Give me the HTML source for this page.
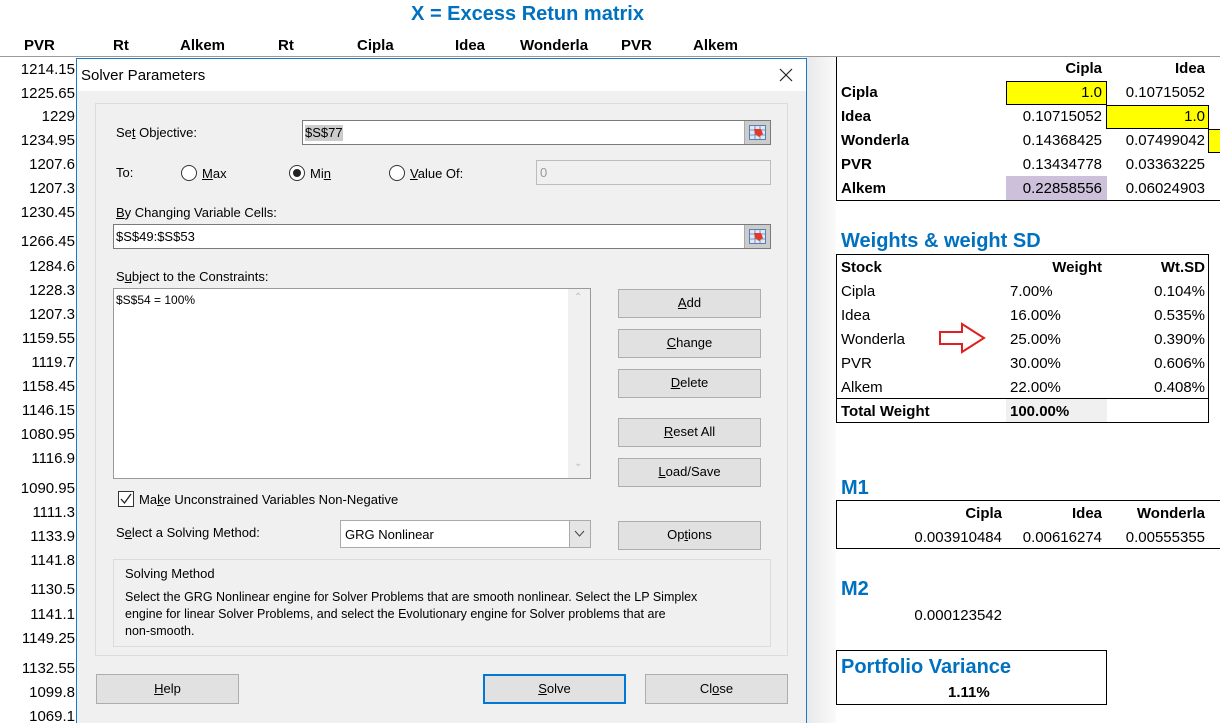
<!DOCTYPE html>
<html><head><meta charset="utf-8"><style>
*{margin:0;padding:0;box-sizing:border-box}
body{width:1220px;height:723px;overflow:hidden;background:#fff;position:relative;font-family:"Liberation Sans",sans-serif;color:#000}
.a{position:absolute;white-space:nowrap}
.xl{font-size:15px;line-height:18px}
.b{font-weight:bold}
.blue{color:#0070c0;font-weight:bold}
.num{position:absolute;right:1145px;font-size:15px;line-height:18px}
.d{font-size:13px;line-height:16px;color:#000}
.btn{position:absolute;background:#e1e1e1;border:1px solid #adadad;font-size:13px;text-align:center;line-height:26px}
.inp{position:absolute;background:#fff;border:1px solid #7a7a7a}
.rad{position:absolute;width:16px;height:16px;border:1px solid #333;border-radius:50%;background:#fff}
u{text-decoration:underline}
.r{text-align:right}
</style></head><body>
<div class="a blue" style="left:400px;top:2px;width:255px;text-align:center;font-size:20px;line-height:24px">X = Excess Retun matrix</div>
<div class="a xl b" style="left:24px;top:37px">PVR</div>
<div class="a xl b" style="left:113px;top:37px">Rt</div>
<div class="a xl b" style="left:180px;top:37px">Alkem</div>
<div class="a xl b" style="left:278px;top:37px">Rt</div>
<div class="a xl b" style="left:357px;top:37px">Cipla</div>
<div class="a xl b" style="left:455px;top:37px">Idea</div>
<div class="a xl b" style="left:520px;top:37px">Wonderla</div>
<div class="a xl b" style="left:621px;top:37px">PVR</div>
<div class="a xl b" style="left:693px;top:37px">Alkem</div>
<div class="a" style="left:0;top:56px;width:1220px;height:1px;background:#9a9a9a"></div>

<div class="num" style="top:61px">1214.15</div>
<div class="num" style="top:85px">1225.65</div>
<div class="num" style="top:108px">1229</div>
<div class="num" style="top:132px">1234.95</div>
<div class="num" style="top:156px">1207.6</div>
<div class="num" style="top:180px">1207.3</div>
<div class="num" style="top:204px">1230.45</div>
<div class="num" style="top:233px">1266.45</div>
<div class="num" style="top:258px">1284.6</div>
<div class="num" style="top:282px">1228.3</div>
<div class="num" style="top:306px">1207.3</div>
<div class="num" style="top:330px">1159.55</div>
<div class="num" style="top:354px">1119.7</div>
<div class="num" style="top:378px">1158.45</div>
<div class="num" style="top:402px">1146.15</div>
<div class="num" style="top:426px">1080.95</div>
<div class="num" style="top:450px">1116.9</div>
<div class="num" style="top:480px">1090.95</div>
<div class="num" style="top:504px">1111.3</div>
<div class="num" style="top:528px">1133.9</div>
<div class="num" style="top:552px">1141.8</div>
<div class="num" style="top:581px">1130.5</div>
<div class="num" style="top:606px">1141.1</div>
<div class="num" style="top:630px">1149.25</div>
<div class="num" style="top:660px">1132.55</div>
<div class="num" style="top:684px">1099.8</div>
<div class="num" style="top:708px">1069.1</div>

<div class="a" style="left:806px;top:57px;width:30px;height:666px;background:linear-gradient(90deg,#e8e8e8,#fafafa)"></div>
<div class="a" style="left:836px;top:57px;width:400px;height:144px;border-left:1px solid #000;border-bottom:1px solid #000"></div>
<div class="a" style="left:1006px;top:81px;width:101px;height:24px;background:#ffff00;border:1px solid #000"></div>
<div class="a" style="left:1106px;top:105px;width:103px;height:24px;background:#ffff00;border:1px solid #000"></div>
<div class="a" style="left:1208px;top:129px;width:14px;height:24px;background:#ffff00;border:1px solid #000"></div>
<div class="a" style="left:1006px;top:176px;width:101px;height:24px;background:#ccc0da"></div>
<div class="a xl b r" style="left:1006px;top:60px;width:96px">Cipla</div>
<div class="a xl b r" style="left:1106px;top:60px;width:99px">Idea</div>
<div class="a xl b" style="left:841px;top:84px">Cipla</div>
<div class="a xl b" style="left:841px;top:108px">Idea</div>
<div class="a xl b" style="left:841px;top:132px">Wonderla</div>
<div class="a xl b" style="left:841px;top:156px">PVR</div>
<div class="a xl b" style="left:841px;top:180px">Alkem</div>
<div class="a xl r" style="left:1006px;top:84px;width:96px">1.0</div>
<div class="a xl r" style="left:1106px;top:84px;width:99px">0.10715052</div>
<div class="a xl r" style="left:1006px;top:108px;width:96px">0.10715052</div>
<div class="a xl r" style="left:1106px;top:108px;width:99px">1.0</div>
<div class="a xl r" style="left:1006px;top:132px;width:96px">0.14368425</div>
<div class="a xl r" style="left:1106px;top:132px;width:99px">0.07499042</div>
<div class="a xl r" style="left:1006px;top:156px;width:96px">0.13434778</div>
<div class="a xl r" style="left:1106px;top:156px;width:99px">0.03363225</div>
<div class="a xl r" style="left:1006px;top:180px;width:96px">0.22858556</div>
<div class="a xl r" style="left:1106px;top:180px;width:99px">0.06024903</div>

<div class="a blue" style="left:841px;top:229px;font-size:20px;line-height:24px">Weights &amp; weight SD</div>
<div class="a" style="left:836px;top:254px;width:373px;height:169px;border:1px solid #000"></div>
<div class="a" style="left:836px;top:398px;width:373px;height:1px;background:#000"></div>
<div class="a" style="left:1006px;top:399px;width:101px;height:23px;background:#f0f0f0"></div>
<div class="a xl b" style="left:841px;top:259px">Stock</div>
<div class="a xl b r" style="left:1006px;top:259px;width:96px">Weight</div>
<div class="a xl b r" style="left:1106px;top:259px;width:99px">Wt.SD</div>
<div class="a xl" style="left:841px;top:283px">Cipla</div>
<div class="a xl" style="left:841px;top:307px">Idea</div>
<div class="a xl" style="left:841px;top:331px">Wonderla</div>
<div class="a xl" style="left:841px;top:355px">PVR</div>
<div class="a xl" style="left:841px;top:379px">Alkem</div>
<div class="a xl" style="left:1010px;top:283px">7.00%</div>
<div class="a xl" style="left:1010px;top:307px">16.00%</div>
<div class="a xl" style="left:1010px;top:331px">25.00%</div>
<div class="a xl" style="left:1010px;top:355px">30.00%</div>
<div class="a xl" style="left:1010px;top:379px">22.00%</div>
<div class="a xl r" style="left:1106px;top:283px;width:99px">0.104%</div>
<div class="a xl r" style="left:1106px;top:307px;width:99px">0.535%</div>
<div class="a xl r" style="left:1106px;top:331px;width:99px">0.390%</div>
<div class="a xl r" style="left:1106px;top:355px;width:99px">0.606%</div>
<div class="a xl r" style="left:1106px;top:379px;width:99px">0.408%</div>
<div class="a xl b" style="left:841px;top:403px">Total Weight</div>
<div class="a xl b" style="left:1010px;top:403px">100.00%</div>
<svg class="a" style="left:938px;top:322px" width="50" height="32"><path d="M2 10 H24 V2 L46 16 L24 30 V22 H2 Z" fill="none" stroke="#e02020" stroke-width="2"/></svg>

<div class="a blue" style="left:841px;top:476px;font-size:20px;line-height:24px">M1</div>
<div class="a" style="left:836px;top:500px;width:400px;height:49px;border:1px solid #000"></div>
<div class="a xl b r" style="left:900px;top:505px;width:102px">Cipla</div>
<div class="a xl b r" style="left:1006px;top:505px;width:96px">Idea</div>
<div class="a xl b r" style="left:1106px;top:505px;width:99px">Wonderla</div>
<div class="a xl r" style="left:900px;top:529px;width:102px">0.003910484</div>
<div class="a xl r" style="left:1006px;top:529px;width:96px">0.00616274</div>
<div class="a xl r" style="left:1106px;top:529px;width:99px">0.00555355</div>
<div class="a blue" style="left:841px;top:577px;font-size:20px;line-height:24px">M2</div>
<div class="a xl r" style="left:900px;top:607px;width:102px">0.000123542</div>
<div class="a" style="left:836px;top:650px;width:271px;height:55px;border:1px solid #000"></div>
<div class="a blue" style="left:841px;top:655px;font-size:20px;line-height:24px">Portfolio Variance</div>
<div class="a xl b" style="left:948px;top:684px">1.11%</div>

<div class="a" style="left:76px;top:58px;width:731px;height:665px;background:#f0f0f0;border:1px solid #1979ca;border-bottom:none"></div>
<div class="a" style="left:77px;top:59px;width:729px;height:32px;background:#fff"></div>
<div class="a" style="left:81px;top:67px;font-size:15px;line-height:18px">Solver Parameters</div>
<svg class="a" style="left:779px;top:68px" width="14" height="14"><path d="M1 1 L13 13 M13 1 L1 13" stroke="#222" stroke-width="1.2"/></svg>
<div class="a" style="left:95px;top:103px;width:693px;height:553px;border:1px solid #dcdcdc"></div>

<div class="a d" style="left:116px;top:125px">Se<u>t</u> Objective:</div>
<div class="inp" style="left:302px;top:120px;width:469px;height:25px"></div>
<div class="a d" style="left:305px;top:125px;background:#cccccc">$S$77</div>
<div class="a" style="left:744px;top:121px;width:26px;height:23px;background:#ccc;border-left:1px solid #aaa"></div>
<svg class="a" style="left:749px;top:125px" width="17" height="15"><rect x="0.5" y="0.5" width="16" height="14" fill="#dfe8f5" stroke="#5a7fb5"/><path d="M0 5H17M0 10H17M6 0V15M11 0V15" stroke="#5a7fb5" stroke-width=".8"/><path d="M5 4 L12 4 L14 9 L10 12 L6 9Z" fill="#e03a2a"/></svg>

<div class="a d" style="left:116px;top:165px">To:</div>
<div class="rad" style="left:181px;top:165px"></div>
<div class="a d" style="left:202px;top:166px"><u>M</u>ax</div>
<div class="rad" style="left:289px;top:165px"></div>
<div class="a" style="left:293px;top:169px;width:8px;height:8px;border-radius:50%;background:#222"></div>
<div class="a d" style="left:310px;top:166px">Mi<u>n</u></div>
<div class="rad" style="left:389px;top:165px"></div>
<div class="a d" style="left:410px;top:166px"><u>V</u>alue Of:</div>
<div class="a" style="left:536px;top:160px;width:235px;height:25px;border:1px solid #bcbcbc;background:#f0f0f0"></div>
<div class="a d" style="left:540px;top:165px;color:#999">0</div>

<div class="a d" style="left:116px;top:205px"><u>B</u>y Changing Variable Cells:</div>
<div class="inp" style="left:113px;top:224px;width:658px;height:25px"></div>
<div class="a d" style="left:116px;top:229px">$S$49:$S$53</div>
<div class="a" style="left:744px;top:225px;width:26px;height:23px;background:#ccc;border-left:1px solid #aaa"></div>
<svg class="a" style="left:749px;top:229px" width="17" height="15"><rect x="0.5" y="0.5" width="16" height="14" fill="#dfe8f5" stroke="#5a7fb5"/><path d="M0 5H17M0 10H17M6 0V15M11 0V15" stroke="#5a7fb5" stroke-width=".8"/><path d="M5 4 L12 4 L14 9 L10 12 L6 9Z" fill="#e03a2a"/></svg>

<div class="a d" style="left:116px;top:269px">S<u>u</u>bject to the Constraints:</div>
<div class="inp" style="left:113px;top:288px;width:478px;height:191px;border-color:#9a9a9a"></div>
<div class="a" style="left:568px;top:289px;width:22px;height:189px;background:#f0f0f0"></div>
<div class="a" style="left:574px;top:292px;font-size:10px;color:#bbb">&#8963;</div>
<div class="a" style="left:574px;top:458px;font-size:10px;color:#bbb">&#8964;</div>
<div class="a" style="left:116px;top:293px;font-size:12px">$S$54 = 100%</div>

<div class="btn" style="left:618px;top:289px;width:143px;height:29px"><u>A</u>dd</div>
<div class="btn" style="left:618px;top:329px;width:143px;height:29px"><u>C</u>hange</div>
<div class="btn" style="left:618px;top:369px;width:143px;height:29px"><u>D</u>elete</div>
<div class="btn" style="left:618px;top:418px;width:143px;height:29px"><u>R</u>eset All</div>
<div class="btn" style="left:618px;top:458px;width:143px;height:29px"><u>L</u>oad/Save</div>
<div class="btn" style="left:618px;top:521px;width:143px;height:29px">Op<u>t</u>ions</div>

<div class="a" style="left:118px;top:491px;width:16px;height:16px;border:1px solid #333;background:#fff"></div>
<svg class="a" style="left:119px;top:492px" width="14" height="14"><path d="M2 7 L5.5 11 L12 2" fill="none" stroke="#222" stroke-width="1.3"/></svg>
<div class="a d" style="left:139px;top:492px">Ma<u>k</u>e Unconstrained Variables Non-Negative</div>

<div class="a d" style="left:116px;top:525px">S<u>e</u>lect a Solving Method:</div>
<div class="a" style="left:340px;top:520px;width:251px;height:28px;background:#fff;border:1px solid #aaa"></div>
<div class="a" style="left:569px;top:521px;width:21px;height:26px;background:#e5e5e5;border-left:1px solid #aaa"></div>
<svg class="a" style="left:574px;top:530px" width="11" height="8"><path d="M1 1 L5.5 6 L10 1" fill="none" stroke="#444"/></svg>
<div class="a d" style="left:345px;top:527px">GRG Nonlinear</div>

<div class="a" style="left:113px;top:559px;width:658px;height:88px;border:1px solid #dcdcdc"></div>
<div class="a d" style="left:125px;top:566px">Solving Method</div>
<div class="a d" style="left:125px;top:589px;font-size:12.5px;line-height:17px">Select the GRG Nonlinear engine for Solver Problems that are smooth nonlinear. Select the LP Simplex<br>engine for linear Solver Problems, and select the Evolutionary engine for Solver problems that are<br>non-smooth.</div>

<div class="btn" style="left:96px;top:674px;width:143px;height:30px;line-height:28px"><u>H</u>elp</div>
<div class="btn" style="left:483px;top:674px;width:143px;height:30px;line-height:26px;border:2px solid #0078d7"><u>S</u>olve</div>
<div class="btn" style="left:645px;top:674px;width:143px;height:30px;line-height:28px">Cl<u>o</u>se</div>
</body></html>
